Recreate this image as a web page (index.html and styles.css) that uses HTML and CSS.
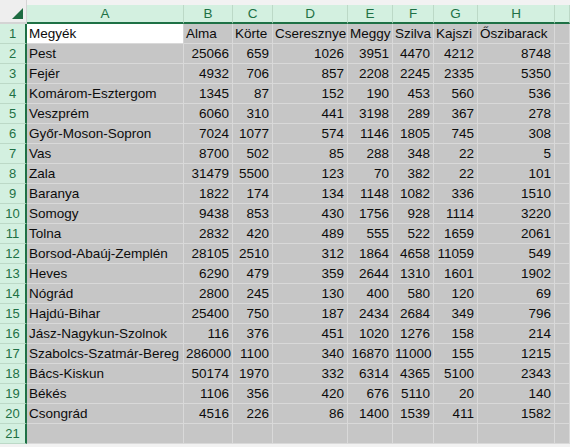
FILE: index.html
```html
<!DOCTYPE html>
<html lang="hu">
<head>
<meta charset="utf-8">
<title>Megyék</title>
<link rel="stylesheet" href="styles.css">
</head>
<body>
<div class="sheet" id="sheet">
  <div class="corner"><span class="tri"></span></div>
  <div class="ch">A</div><div class="ch">B</div><div class="ch">C</div><div class="ch">D</div><div class="ch">E</div><div class="ch">F</div><div class="ch">G</div><div class="ch">H</div><div class="ch"></div>
</div>
<script src="script.js"></script>
</body>
</html>
```
FILE: script.js
```js
const rows = [
  ["Megyék","Alma","Körte","Cseresznye","Meggy","Szilva","Kajszi","Őszibarack"],
  ["Pest",25066,659,1026,3951,4470,4212,8748],
  ["Fejér",4932,706,857,2208,2245,2335,5350],
  ["Komárom-Esztergom",1345,87,152,190,453,560,536],
  ["Veszprém",6060,310,441,3198,289,367,278],
  ["Győr-Moson-Sopron",7024,1077,574,1146,1805,745,308],
  ["Vas",8700,502,85,288,348,22,5],
  ["Zala",31479,5500,123,70,382,22,101],
  ["Baranya",1822,174,134,1148,1082,336,1510],
  ["Somogy",9438,853,430,1756,928,1114,3220],
  ["Tolna",2832,420,489,555,522,1659,2061],
  ["Borsod-Abaúj-Zemplén",28105,2510,312,1864,4658,11059,549],
  ["Heves",6290,479,359,2644,1310,1601,1902],
  ["Nógrád",2800,245,130,400,580,120,69],
  ["Hajdú-Bihar",25400,750,187,2434,2684,349,796],
  ["Jász-Nagykun-Szolnok",116,376,451,1020,1276,158,214],
  ["Szabolcs-Szatmár-Bereg",286000,1100,340,16870,11000,155,1215],
  ["Bács-Kiskun",50174,1970,332,6314,4365,5100,2343],
  ["Békés",1106,356,420,676,5110,20,140],
  ["Csongrád",4516,226,86,1400,1539,411,1582],
  ["","","","","","","",""]
];
const sheet = document.getElementById("sheet");
rows.forEach((r, i) => {
  const rh = document.createElement("div");
  rh.className = "rh";
  rh.textContent = i + 1;
  sheet.appendChild(rh);
  r.forEach((v, j) => {
    const c = document.createElement("div");
    c.className = "cell" + (typeof v === "number" ? " num" : "") + (i === 0 && j === 0 ? " active" : "");
    c.textContent = v;
    sheet.appendChild(c);
  });
  const e = document.createElement("div");
  e.className = "cell";
  sheet.appendChild(e);
});
```
FILE: styles.css
```css
* { box-sizing: border-box; }
html, body { margin: 0; padding: 0; }
body {
  background: #f2f2f2;
  padding-top: 5px;
  font-family: "Liberation Sans", Arial, sans-serif;
  overflow: hidden;
}
.sheet {
  display: grid;
  grid-template-columns: 27px 157px 49px 40px 75px 45px 41px 44px 77px 1fr;
  grid-template-rows: 19px;
  grid-auto-rows: 20px;
  width: 570px;
}
.corner {
  position: relative;
  background: #eeeeee;
  border-right: 1px solid #d4d4d4;
  border-bottom: 2px solid #d4d4d4;
  margin-top: -5px;
  height: 24px;
}
.tri {
  position: absolute;
  right: 3px;
  bottom: 3px;
  width: 0;
  height: 0;
  border-left: 11px solid transparent;
  border-bottom: 11px solid #1e6b41;
}
.ch {
  background: #d3f0e0;
  color: #1e7145;
  font-size: 13.5px;
  text-align: center;
  line-height: 17px;
  border-right: 1px solid #bcd9c7;
  border-bottom: 2px solid #1e7145;
}
.rh {
  background: #d3f0e0;
  color: #1e7145;
  font-size: 13px;
  text-align: center;
  line-height: 19px;
  border-right: 2px solid #1e7145;
  border-bottom: 1px solid #bcd9c7;
}
.cell {
  background: #c6c6c6;
  color: #0c0c0c;
  font-size: 13.5px;
  line-height: 19px;
  padding: 0 2px 0 2px;
  white-space: nowrap;
  overflow: visible;
  border-right: 1px solid #d9d9d9;
  border-bottom: 1px solid #d9d9d9;
}
.cell.num { text-align: right; padding-right: 3px; }
.cell.active { background: #ffffff; border-right-color: #d4d4d4; }
```
